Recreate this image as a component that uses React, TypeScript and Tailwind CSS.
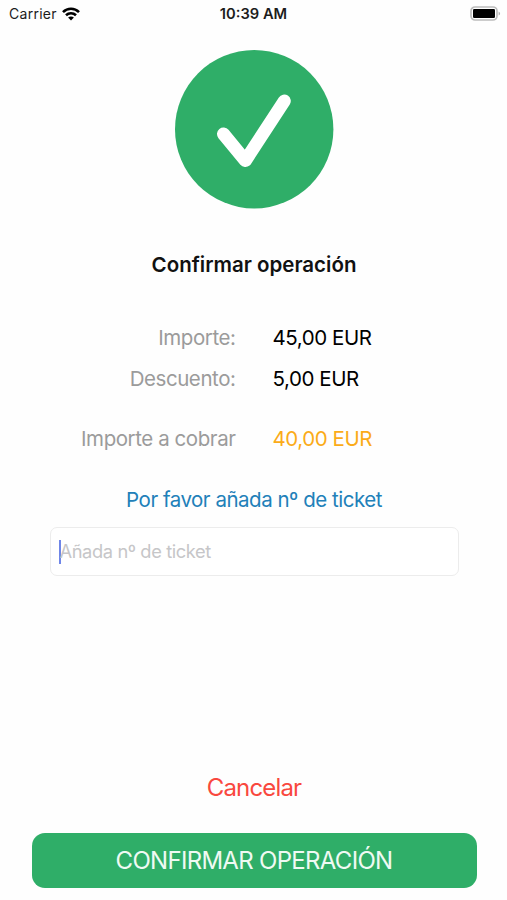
import { useState } from 'react'
import type { FormEvent } from 'react'

interface Linea {
  etiqueta: string
  importe:  string
}

const lineas: Linea[] = [
  { etiqueta: 'Importe:', importe: '45,00 EUR' },
  { etiqueta: 'Descuento:', importe: '5,00 EUR' },
]

function BarraEstado() {
  return (
    <header className="grid h-7 grid-cols-3 items-center pl-[9px] pr-[6px] text-[14px] leading-7 text-[#1c1c1c]">
      <div className="flex items-center gap-[5px]">
        <span className="tracking-[0.02em]">Carrier</span>
        <svg className="-mt-px" width="18" height="14" viewBox="0 0 18 14" fill="none" stroke="#000" strokeWidth="2.6">
          <path d="M1 5.1C5.5 0.6 12.5 0.6 17 5.1" />
          <path d="M4 8.3C6.8 5.6 11.2 5.6 14 8.3" />
          <path d="M9 13.4L6.1 10.5C7.7 9 10.3 9 11.9 10.5Z" fill="#000" stroke="none" />
        </svg>
      </div>
      <span className="-ml-[3px] whitespace-nowrap text-center text-[14.7px] font-semibold">10:39 AM</span>
      <svg className="-mt-[2px] justify-self-end" width="31" height="15" viewBox="0 0 31 15">
        <rect x="1" y="1" width="26" height="13" rx="4" fill="#fff" stroke="#bcbcbc" strokeWidth="1.7" />
        <rect x="3" y="3" width="22" height="9" rx="1.2" fill="#000" />
        <path d="M28.6 5.4C30.6 6.2 30.6 8.8 28.6 9.6Z" fill="#b0b0b0" />
      </svg>
    </header>
  )
}

export default function App() {
  const [ticket, setTicket] = useState('')

  function confirmar(e: FormEvent) {
    e.preventDefault()
  }

  return (
    <div className="flex h-[900px] w-[507px] flex-col overflow-hidden bg-[#fefefe] font-[Inter,sans-serif] text-black">
      <BarraEstado />

      <form onSubmit={confirmar} className="flex flex-1 flex-col items-center pl-px pt-[22px]">
        <svg width="159" height="159" viewBox="0 0 159 159" fill="none">
          <circle cx="79.2" cy="79.2" r="79.2" fill="#2fae68" />
          <path
            d="M48.5 84L70.4 110.6L109.3 51"
            stroke="#fff"
            strokeWidth="13"
            strokeLinecap="round"
            strokeLinejoin="round"
          />
        </svg>

        <h1 className="mt-[41px] text-[20.5px] font-semibold leading-[30px] text-[#111]">Confirmar operación</h1>

        <dl className="mt-[37px] w-full text-[20.5px] leading-[41px] tracking-[-0.43px]">
          {lineas.map((l) => (
            <div key={l.etiqueta} className="flex gap-[37px]">
              <dt className="w-[234.5px] text-right text-[#9b9b9b]">{l.etiqueta}</dt>
              <dd>{l.importe}</dd>
            </div>
          ))}
          <div className="mt-[19px] flex gap-[37px]">
            <dt className="w-[234.5px] text-right text-[#9b9b9b]">Importe a cobrar</dt>
            <dd className="text-[#fbab18]">{'40,00 EUR'}</dd>
          </div>
        </dl>

        <label htmlFor="ticket" className="mt-[26px] text-[20.5px] leading-[30px] tracking-[-0.48px] text-[#2180b9]">
          Por favor añada nº de ticket
        </label>

        <div className="mt-[12px] flex h-[49px] w-[409px] items-center rounded-[7px] border border-[#ececec] bg-white pl-[8px] pr-2">
          <span className="h-6 w-[2px] bg-[#6f86e8]" />
          <input
            id="ticket"
            type="text"
            value={ticket}
            onChange={(e) => setTicket(e.target.value)}
            placeholder="Añada nº de ticket"
            className="-ml-px flex-1 bg-transparent text-[18.3px] tracking-[-0.4px] text-black outline-none placeholder:text-[#c6c6c8]"
          />
        </div>

        <button type="button" className="mt-auto text-[24px] leading-[36px] tracking-[-0.85px] text-[#f9483e]">
          Cancelar
        </button>
        <button
          type="submit"
          className="mb-[12px] mt-[27px] h-[55px] w-[445px] rounded-[13px] bg-[#2fae68] pt-px text-[24px] tracking-[-0.7px] text-[#effaf3]"
        >
          CONFIRMAR OPERACIÓN
        </button>
      </form>
    </div>
  )
}
